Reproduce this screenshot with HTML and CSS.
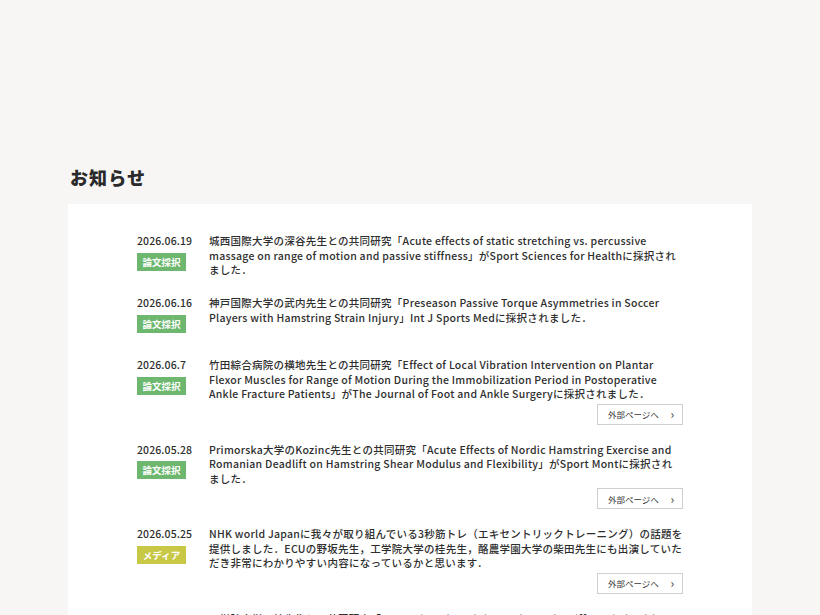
FILE: index.html
```html
<!DOCTYPE html>
<html lang="ja">
  <head>
    <meta charset="UTF-8" />
    <meta name="viewport" content="width=device-width, initial-scale=1.0" />
    <title>お知らせ</title>
    <link rel="stylesheet" href="styles.css">
  </head>
  <body>
    <div class="container">
      <h2 class="page-title">お知らせ</h2>

      <div class="news-panel">
        <ul class="news-list">
          <li class="news-item">
            <div class="news-meta">
              <span class="news-date">2026.06.19</span>
              <span class="tag tag-paper">論文採択</span>
            </div>
            <div class="news-body">
              <p>城西国際大学の深谷先生との共同研究「Acute effects of static stretching vs. percussive massage on range of motion and passive stiffness」がSport Sciences for Healthに採択されました．</p>
            </div>
          </li>

          <li class="news-item">
            <div class="news-meta">
              <span class="news-date">2026.06.16</span>
              <span class="tag tag-paper">論文採択</span>
            </div>
            <div class="news-body">
              <p>神戸国際大学の武内先生との共同研究「Preseason Passive Torque Asymmetries in Soccer Players with Hamstring Strain Injury」Int J Sports Medに採択されました．</p>
            </div>
          </li>

          <li class="news-item">
            <div class="news-meta">
              <span class="news-date">2026.06.7</span>
              <span class="tag tag-paper">論文採択</span>
            </div>
            <div class="news-body">
              <p>竹田綜合病院の横地先生との共同研究「Effect of Local Vibration Intervention on Plantar Flexor Muscles for Range of Motion During the Immobilization Period in Postoperative Ankle Fracture Patients」がThe Journal of Foot and Ankle Surgeryに採択されました．</p>
              <a href="#" class="ext-link">外部ページへ<span class="chev">›</span></a>
            </div>
          </li>

          <li class="news-item">
            <div class="news-meta">
              <span class="news-date">2026.05.28</span>
              <span class="tag tag-paper">論文採択</span>
            </div>
            <div class="news-body">
              <p>Primorska大学のKozinc先生との共同研究「Acute Effects of Nordic Hamstring Exercise and Romanian Deadlift on Hamstring Shear Modulus and Flexibility」がSport Montに採択されました．</p>
              <a href="#" class="ext-link">外部ページへ<span class="chev">›</span></a>
            </div>
          </li>

          <li class="news-item">
            <div class="news-meta">
              <span class="news-date">2026.05.25</span>
              <span class="tag tag-media">メディア</span>
            </div>
            <div class="news-body">
              <p>NHK world Japanに我々が取り組んでいる3秒筋トレ（エキセントリックトレーニング）の話題を提供しました．ECUの野坂先生，工学院大学の桂先生，酪農学園大学の柴田先生にも出演していただき非常にわかりやすい内容になっているかと思います．</p>
              <a href="#" class="ext-link">外部ページへ<span class="chev">›</span></a>
            </div>
          </li>

          <li class="news-item">
            <div class="news-meta">
              <span class="news-date">2026.04.21</span>
              <span class="tag tag-paper">論文採択</span>
            </div>
            <div class="news-body">
              <p>工学院大学の桂先生との共同研究「Eccentric-only training and muscle stiffness in healthy adults」がJournal of Sports Sciencesに採択されました．</p>
            </div>
          </li>
        </ul>
      </div>
    </div>
  </body>
</html>
```

FILE: styles.css
```css
body {
  font-family: "Noto Sans CJK JP", sans-serif;
  margin: 0;
  padding: 0;
  background-color: #f7f6f5;
  color: #2e2e2e;
}
.container {
  max-width: 684px;
  margin: 0 auto;
  padding-top: 163px;
}
.page-title {
  margin: 0 0 13px 2px;
  font-size: 18px;
  font-weight: 900;
  letter-spacing: 0.06em;
  line-height: 28px;
  color: #2a2a2a;
}
.news-panel {
  background: white;
  padding: 30px 69px 40px;
}
.news-list {
  list-style: none;
  margin: 0;
  padding: 0;
}
.news-item {
  display: flex;
  min-height: 44px;
  margin-bottom: 18px;
}
.news-meta {
  width: 72px;
  flex-shrink: 0;
  display: flex;
  flex-direction: column;
  align-items: flex-start;
}
.news-date {
  font-size: 10.5px;
  font-weight: 500;
  line-height: 14.5px;
  letter-spacing: 0.01em;
}
.tag {
  margin-top: 4px;
  width: 49px;
  height: 18px;
  line-height: 18px;
  text-align: center;
  font-size: 9.5px;
  font-weight: 700;
  color: white;
}
.tag-paper {
  background: #6db76f;
}
.tag-media {
  background: #c8c846;
}
.news-body {
  flex: 1;
  display: flex;
  flex-direction: column;
  align-items: flex-end;
}
.news-body p {
  margin: 0;
  align-self: stretch;
  font-size: 10.5px;
  font-weight: 500;
  line-height: 14.5px;
  letter-spacing: 0.025em;
}
.ext-link {
  display: flex;
  align-items: center;
  justify-content: space-between;
  box-sizing: border-box;
  width: 86px;
  height: 21px;
  margin-top: 2px;
  padding: 0 8px 0 10px;
  border: 1px solid #cfcfcf;
  font-size: 8.5px;
  color: #333;
  text-decoration: none;
}
.chev {
  font-size: 12px;
  line-height: 1;
}
```
